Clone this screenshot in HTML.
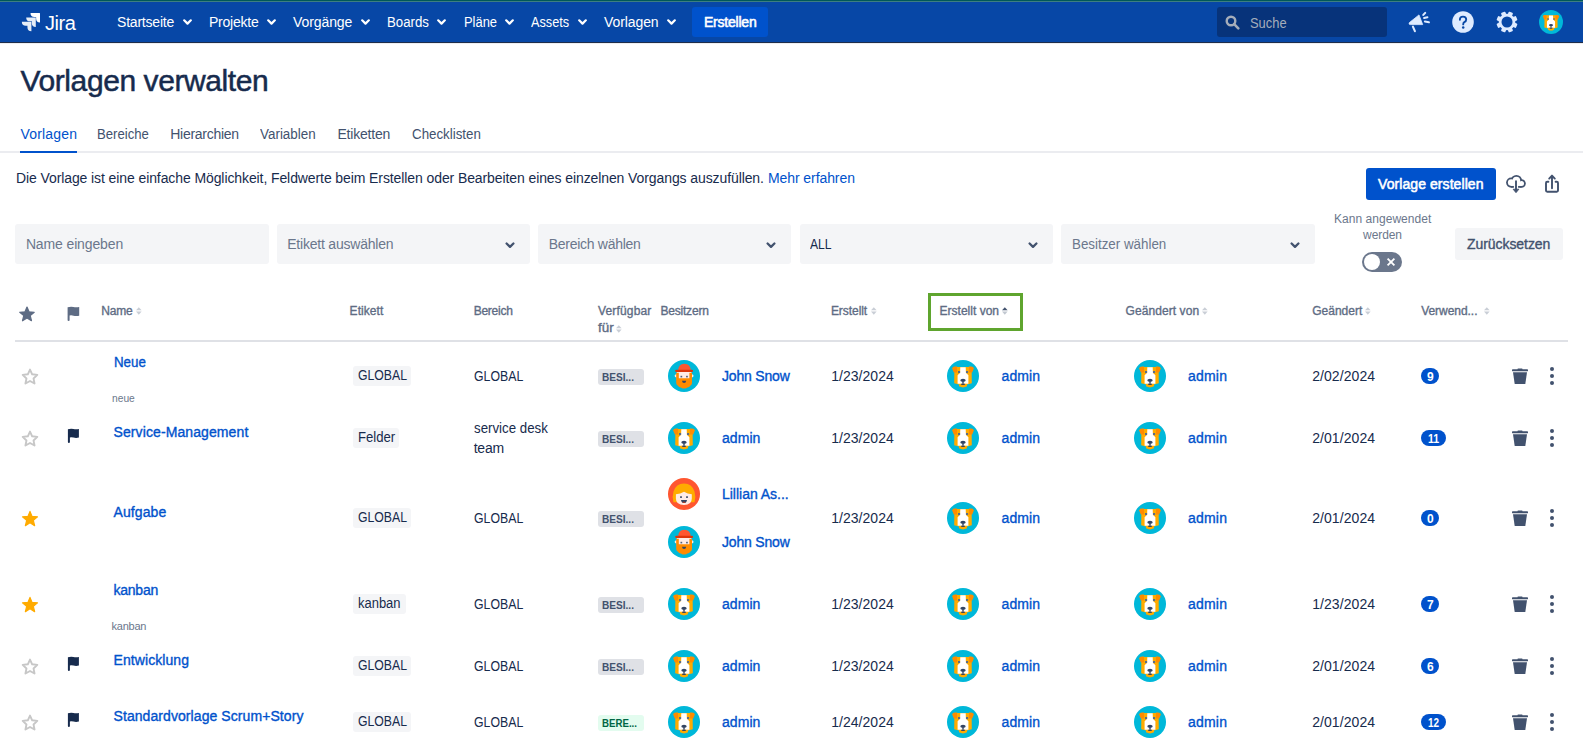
<!DOCTYPE html>
<html><head><meta charset="utf-8"><style>
html,body{margin:0;padding:0;width:1583px;height:740px;overflow:hidden;background:#fff;}
body{position:relative;font-family:"Liberation Sans",sans-serif;}
.t{position:absolute;white-space:nowrap;}
.r{position:absolute;display:block;}
</style></head><body>
<div class="r" style="left:0px;top:0px;width:1583px;height:42px;background:#0747A6;"></div>
<div class="r" style="left:0px;top:0px;width:1583px;height:1px;background:#00585A;"></div>
<div class="r" style="left:0px;top:1px;width:1583px;height:1px;background:#3D7F80;"></div>
<div class="r" style="left:0px;top:42px;width:1583px;height:1px;background:#1F2D4A;"></div>
<div class="r" style="left:0px;top:43px;width:1583px;height:1px;background:#EDEEF1;"></div>
<svg class="r" style="left:21px;top:13px;" width="19" height="19" viewBox="0 0 23 23"><g fill="#fff"><path d="M22.2 0H11.5a4.8 4.8 0 0 0 4.8 4.8h2v1.9a4.8 4.8 0 0 0 4.8 4.8V.9a.9.9 0 0 0-.9-.9z"/><path d="M16.9 5.3H6.3a4.8 4.8 0 0 0 4.8 4.8h2V12a4.8 4.8 0 0 0 4.8 4.8V6.2a.9.9 0 0 0-1-.9z" opacity=".9"/><path d="M11.6 10.7H1a4.8 4.8 0 0 0 4.8 4.8h2v1.9a4.8 4.8 0 0 0 4.8 4.8V11.6a.9.9 0 0 0-1-.9z" opacity=".9"/></g></svg>
<div class="t" style="left:45.00px;top:13.07px;font-size:20.00px;line-height:20.00px;color:#FFFFFF;letter-spacing:-0.417px;">Jira</div>
<div class="t" style="left:117.00px;top:15.15px;font-size:14.00px;line-height:14.00px;color:#FFFFFF;letter-spacing:-0.203px;">Startseite</div>
<svg class="r" style="left:183px;top:18.5px;" width="9" height="7" viewBox="0 0 9 7"><path d="M1.2 1.3L4.5 4.6L7.8 1.3" fill="none" stroke="#FFFFFF" stroke-width="2.2" stroke-linecap="round" stroke-linejoin="round"/></svg>
<div class="t" style="left:209.00px;top:15.15px;font-size:14.00px;line-height:14.00px;color:#FFFFFF;letter-spacing:-0.225px;">Projekte</div>
<svg class="r" style="left:267px;top:18.5px;" width="9" height="7" viewBox="0 0 9 7"><path d="M1.2 1.3L4.5 4.6L7.8 1.3" fill="none" stroke="#FFFFFF" stroke-width="2.2" stroke-linecap="round" stroke-linejoin="round"/></svg>
<div class="t" style="left:293.00px;top:15.15px;font-size:14.00px;line-height:14.00px;color:#FFFFFF;letter-spacing:-0.086px;">Vorgänge</div>
<svg class="r" style="left:361px;top:18.5px;" width="9" height="7" viewBox="0 0 9 7"><path d="M1.2 1.3L4.5 4.6L7.8 1.3" fill="none" stroke="#FFFFFF" stroke-width="2.2" stroke-linecap="round" stroke-linejoin="round"/></svg>
<div class="t" style="left:387.00px;top:15.15px;font-size:14.00px;line-height:14.00px;color:#FFFFFF;transform:scaleX(0.9465);transform-origin:0.00px 0;">Boards</div>
<svg class="r" style="left:437px;top:18.5px;" width="9" height="7" viewBox="0 0 9 7"><path d="M1.2 1.3L4.5 4.6L7.8 1.3" fill="none" stroke="#FFFFFF" stroke-width="2.2" stroke-linecap="round" stroke-linejoin="round"/></svg>
<div class="t" style="left:464.00px;top:15.15px;font-size:14.00px;line-height:14.00px;color:#FFFFFF;transform:scaleX(0.9231);transform-origin:0.00px 0;">Pläne</div>
<svg class="r" style="left:505px;top:18.5px;" width="9" height="7" viewBox="0 0 9 7"><path d="M1.2 1.3L4.5 4.6L7.8 1.3" fill="none" stroke="#FFFFFF" stroke-width="2.2" stroke-linecap="round" stroke-linejoin="round"/></svg>
<div class="t" style="left:531.00px;top:15.15px;font-size:14.00px;line-height:14.00px;color:#FFFFFF;transform:scaleX(0.9095);transform-origin:0.00px 0;">Assets</div>
<svg class="r" style="left:578px;top:18.5px;" width="9" height="7" viewBox="0 0 9 7"><path d="M1.2 1.3L4.5 4.6L7.8 1.3" fill="none" stroke="#FFFFFF" stroke-width="2.2" stroke-linecap="round" stroke-linejoin="round"/></svg>
<div class="t" style="left:604.00px;top:15.15px;font-size:14.00px;line-height:14.00px;color:#FFFFFF;letter-spacing:-0.093px;">Vorlagen</div>
<svg class="r" style="left:667px;top:18.5px;" width="9" height="7" viewBox="0 0 9 7"><path d="M1.2 1.3L4.5 4.6L7.8 1.3" fill="none" stroke="#FFFFFF" stroke-width="2.2" stroke-linecap="round" stroke-linejoin="round"/></svg>
<div class="r" style="left:692px;top:7px;width:76px;height:30px;background:#0052CC;border-radius:3px;"></div>
<div class="t" style="left:704.00px;top:15.15px;font-size:14.00px;line-height:14.00px;color:#FFFFFF;-webkit-text-stroke:0.55px #FFFFFF;letter-spacing:-0.219px;">Erstellen</div>
<div class="r" style="left:1217px;top:7px;width:170px;height:30px;background:#07337A;border-radius:3px;"></div>
<svg class="r" style="left:1225px;top:15px;" width="15" height="15" viewBox="0 0 15 15"><circle cx="6" cy="6" r="4.3" fill="none" stroke="#A5ADBA" stroke-width="2.4"/><path d="M9.2 9.2L13.3 13.3" stroke="#A5ADBA" stroke-width="2.6" stroke-linecap="round"/></svg>
<div class="t" style="left:1250.00px;top:16.15px;font-size:14.00px;line-height:14.00px;color:#A5ADBA;transform:scaleX(0.9208);transform-origin:0.00px 0;">Suche</div>
<svg class="r" style="left:1407px;top:11px;" width="24" height="22" viewBox="0 0 24 22"><path d="M2.4 11.6L12 3.9L15.7 13.6H3.2Q1.3 13.5 2.4 11.6Z" fill="#DEEBFF" stroke="#DEEBFF" stroke-width="0.8" stroke-linejoin="round"/><g stroke="#DEEBFF" stroke-width="2.1" stroke-linecap="round"><path d="M5.9 15.6L7.9 20.2"/><path d="M16.3 3.9L18.2 1.9"/><path d="M17.1 7L20.4 6.2"/><path d="M17.9 10.5L21.9 11.2"/></g></svg>
<svg class="r" style="left:1452px;top:11px;" width="22" height="22" viewBox="0 0 22 22"><circle cx="11" cy="11" r="10.8" fill="#DEEBFF"/><path d="M7.9 8.8Q7.9 5.6 11 5.6Q14.2 5.6 14.2 8.5Q14.2 10.3 12.3 11.2Q11.2 11.8 11.2 13.4" fill="none" stroke="#0747A6" stroke-width="1.9" stroke-linecap="round"/><circle cx="11.2" cy="16.4" r="1.25" fill="#0747A6"/></svg>
<svg class="r" style="left:1496px;top:11px;" width="22" height="22" viewBox="0 0 22 22"><g fill="#DEEBFF"><rect x="8.7" y="0.5" width="4.6" height="5" rx="0.9" transform="rotate(22.5 11 11)"/><rect x="8.7" y="0.5" width="4.6" height="5" rx="0.9" transform="rotate(67.5 11 11)"/><rect x="8.7" y="0.5" width="4.6" height="5" rx="0.9" transform="rotate(112.5 11 11)"/><rect x="8.7" y="0.5" width="4.6" height="5" rx="0.9" transform="rotate(157.5 11 11)"/><rect x="8.7" y="0.5" width="4.6" height="5" rx="0.9" transform="rotate(202.5 11 11)"/><rect x="8.7" y="0.5" width="4.6" height="5" rx="0.9" transform="rotate(247.5 11 11)"/><rect x="8.7" y="0.5" width="4.6" height="5" rx="0.9" transform="rotate(292.5 11 11)"/><rect x="8.7" y="0.5" width="4.6" height="5" rx="0.9" transform="rotate(337.5 11 11)"/><circle cx="11" cy="11" r="8.3"/></g><circle cx="11" cy="11" r="5.5" fill="#0747A6"/></svg>
<svg class="r" style="left:1539px;top:10px;" width="24" height="24" viewBox="0 0 32 32"><circle cx="16" cy="16" r="16" fill="#00B8D9"/><path d="M7.4 7H24.6L24.8 23.3L20 24.6V26.3Q16 28.6 12 26.3V24.6L7.2 23.3Z" fill="#FFAB00"/><path d="M5.2 8.5Q5.4 6.6 8 6.6H10V12.5H6.8Z" fill="#FF8B00"/><path d="M26.8 8.5Q26.6 6.6 24 6.6H22V12.5H25.2Z" fill="#FF8B00"/><path d="M13.3 7.2H18.7L18.9 12.8L21.4 15.2V23.8H10.6V15.2L13.1 12.8Z" fill="#FFFFFF"/><rect x="11" y="11" width="2.1" height="2.1" fill="#5E6C84"/><rect x="19" y="11" width="2.1" height="2.1" fill="#5E6C84"/><ellipse cx="16" cy="20.3" rx="2.7" ry="1.5" fill="#344563"/><rect x="15.3" y="21" width="1.4" height="2.8" fill="#344563"/><path d="M13.8 23.8H18.2L17.5 25H14.5Z" fill="#344563"/></svg>
<div class="t" style="left:20.60px;top:65.81px;font-size:30.00px;line-height:30.00px;color:#172B4D;-webkit-text-stroke:0.50px #172B4D;letter-spacing:-0.419px;">Vorlagen verwalten</div>
<div class="r" style="left:0px;top:151px;width:1583px;height:2px;background:#EBECF0;"></div>
<div class="t" style="left:20.60px;top:126.85px;font-size:14.00px;line-height:14.00px;color:#0052CC;letter-spacing:0.164px;">Vorlagen</div>
<div class="t" style="left:97.20px;top:126.85px;font-size:14.00px;line-height:14.00px;color:#42526E;transform:scaleX(0.9376);transform-origin:0.00px 0;">Bereiche</div>
<div class="t" style="left:170.20px;top:126.85px;font-size:14.00px;line-height:14.00px;color:#42526E;letter-spacing:-0.263px;">Hierarchien</div>
<div class="t" style="left:260.40px;top:126.85px;font-size:14.00px;line-height:14.00px;color:#42526E;transform:scaleX(0.9583);transform-origin:0.00px 0;">Variablen</div>
<div class="t" style="left:337.40px;top:126.85px;font-size:14.00px;line-height:14.00px;color:#42526E;letter-spacing:-0.188px;">Etiketten</div>
<div class="t" style="left:411.70px;top:126.85px;font-size:14.00px;line-height:14.00px;color:#42526E;transform:scaleX(0.9520);transform-origin:0.00px 0;">Checklisten</div>
<div class="r" style="left:20px;top:151px;width:57px;height:2px;background:#0052CC;"></div>
<div class="t" style="left:16.00px;top:170.95px;font-size:14.00px;line-height:14.00px;color:#172B4D;letter-spacing:-0.097px;">Die Vorlage ist eine einfache Möglichkeit, Feldwerte beim Erstellen oder Bearbeiten eines einzelnen Vorgangs auszufüllen.</div>
<div class="t" style="left:768.00px;top:170.95px;font-size:14.00px;line-height:14.00px;color:#0052CC;letter-spacing:-0.083px;">Mehr erfahren</div>
<div class="r" style="left:1366px;top:168px;width:130px;height:32px;background:#0052CC;border-radius:3px;"></div>
<div class="t" style="left:1378.00px;top:176.95px;font-size:14.00px;line-height:14.00px;color:#FFFFFF;-webkit-text-stroke:0.55px #FFFFFF;letter-spacing:0.075px;">Vorlage erstellen</div>
<svg class="r" style="left:1505px;top:174px;" width="22" height="20" viewBox="0 0 22 20"><g fill="#42526E"><circle cx="6.2" cy="8.6" r="5.1"/><circle cx="11.4" cy="6.5" r="5.6"/><circle cx="16.5" cy="9.45" r="4.3"/><rect x="6.2" y="8" width="10.3" height="5.75"/></g><g fill="#fff"><circle cx="6.2" cy="8.6" r="3.3"/><circle cx="11.4" cy="6.5" r="3.8"/><circle cx="16.5" cy="9.45" r="2.5"/><rect x="6.2" y="8" width="10.3" height="3.95"/><rect x="8.9" y="10" width="4.2" height="5"/></g><path d="M11 7.3V16" stroke="#42526E" stroke-width="1.9" stroke-linecap="round"/><path d="M8.1 15.2H13.9L11 18.7Z" fill="#42526E" stroke="#42526E" stroke-width="0.8" stroke-linejoin="round"/></svg>
<svg class="r" style="left:1544px;top:174px;" width="16" height="20" viewBox="0 0 16 20"><path d="M8 14.2V2M5.2 4.6L8 1.6L10.8 4.6" fill="none" stroke="#42526E" stroke-width="1.9" stroke-linecap="round" stroke-linejoin="round"/><path d="M4.4 7.8H3.2Q2 7.8 2 9V16.6Q2 17.8 3.2 17.8H12.8Q14 17.8 14 16.6V9Q14 7.8 12.8 7.8H11.6" fill="none" stroke="#42526E" stroke-width="1.9" stroke-linecap="round"/></svg>
<div class="r" style="left:15px;top:224px;width:254px;height:40px;background:#F4F5F7;border-radius:3px;"></div>
<div class="t" style="left:25.90px;top:236.85px;font-size:14.00px;line-height:14.00px;color:#6B778C;letter-spacing:-0.131px;">Name eingeben</div>
<div class="r" style="left:277px;top:224px;width:253px;height:40px;background:#F4F5F7;border-radius:3px;"></div>
<div class="t" style="left:287.20px;top:236.85px;font-size:14.00px;line-height:14.00px;color:#6B778C;letter-spacing:-0.209px;">Etikett auswählen</div>
<svg class="r" style="left:505px;top:241.5px;" width="10" height="7" viewBox="0 0 10 7"><path d="M1.6 1.5L5 4.9L8.4 1.5" fill="none" stroke="#42526E" stroke-width="2.3" stroke-linecap="round" stroke-linejoin="round"/></svg>
<div class="r" style="left:538px;top:224px;width:253px;height:40px;background:#F4F5F7;border-radius:3px;"></div>
<div class="t" style="left:548.80px;top:236.85px;font-size:14.00px;line-height:14.00px;color:#6B778C;letter-spacing:-0.288px;">Bereich wählen</div>
<svg class="r" style="left:766px;top:241.5px;" width="10" height="7" viewBox="0 0 10 7"><path d="M1.6 1.5L5 4.9L8.4 1.5" fill="none" stroke="#42526E" stroke-width="2.3" stroke-linecap="round" stroke-linejoin="round"/></svg>
<div class="r" style="left:800px;top:224px;width:253px;height:40px;background:#F4F5F7;border-radius:3px;"></div>
<div class="t" style="left:810.20px;top:236.85px;font-size:14.00px;line-height:14.00px;color:#172B4D;transform:scaleX(0.8683);transform-origin:0.00px 0;">ALL</div>
<svg class="r" style="left:1028px;top:241.5px;" width="10" height="7" viewBox="0 0 10 7"><path d="M1.6 1.5L5 4.9L8.4 1.5" fill="none" stroke="#42526E" stroke-width="2.3" stroke-linecap="round" stroke-linejoin="round"/></svg>
<div class="r" style="left:1061px;top:224px;width:254px;height:40px;background:#F4F5F7;border-radius:3px;"></div>
<div class="t" style="left:1072.10px;top:236.85px;font-size:14.00px;line-height:14.00px;color:#6B778C;transform:scaleX(0.9537);transform-origin:0.00px 0;">Besitzer wählen</div>
<svg class="r" style="left:1290px;top:241.5px;" width="10" height="7" viewBox="0 0 10 7"><path d="M1.6 1.5L5 4.9L8.4 1.5" fill="none" stroke="#42526E" stroke-width="2.3" stroke-linecap="round" stroke-linejoin="round"/></svg>
<div class="t" style="left:1334.00px;top:212.54px;font-size:12.00px;line-height:12.00px;color:#6B778C;letter-spacing:0.039px;">Kann angewendet</div>
<div class="t" style="left:1363.12px;top:228.54px;font-size:12.00px;line-height:12.00px;color:#6B778C;letter-spacing:-0.100px;">werden</div>
<div class="r" style="left:1362px;top:252px;width:40px;height:20px;background:#6B778C;border-radius:10px;"></div>
<div class="r" style="left:1364px;top:254px;width:16px;height:16px;background:#FFFFFF;border-radius:8px;"></div>
<svg class="r" style="left:1385px;top:256px;" width="12" height="12" viewBox="0 0 12 12"><path d="M2.6 2.6L9.4 9.4M9.4 2.6L2.6 9.4" stroke="#fff" stroke-width="1.8"/></svg>
<div class="r" style="left:1455px;top:228px;width:108px;height:32px;background:#F4F5F7;border-radius:3px;"></div>
<div class="t" style="left:1467.00px;top:237.15px;font-size:14.00px;line-height:14.00px;color:#42526E;-webkit-text-stroke:0.35px #42526E;letter-spacing:-0.059px;">Zurücksetzen</div>
<svg class="r" style="left:19px;top:306px;" width="16" height="16" viewBox="0 0 16 16"><path d="M8.00 1.00L10.00 5.85L15.23 6.25L11.23 9.65L12.47 14.75L8.00 12.00L3.53 14.75L4.77 9.65L0.77 6.25L6.00 5.85Z" fill="#5E6C84" stroke="#5E6C84" stroke-width="1.2" stroke-linejoin="round"/></svg>
<svg class="r" style="left:67px;top:306px;" width="13" height="16" viewBox="0 0 13 16"><path d="M0.6 1.2Q4 0.2 6.5 1Q9 1.7 12.2 1V9.7Q9 10.4 6.5 9.7Q4 9 2.6 9.6V14.2Q2.6 15 1.6 15Q0.6 15 0.6 14.2Z" fill="#5E6C84"/></svg>
<div class="t" style="left:101.20px;top:304.54px;font-size:12.00px;line-height:12.00px;color:#5E6C84;-webkit-text-stroke:0.35px #5E6C84;letter-spacing:-0.183px;">Name</div>
<svg class="r" style="left:135.6px;top:307px;" width="6" height="8" viewBox="0 0 6 8"><path d="M0 3.3L2.8 0.3L5.6 3.3Z" fill="#C9CED6"/><path d="M0 4.6L2.8 7.7L5.6 4.6Z" fill="#C9CED6"/></svg>
<div class="t" style="left:349.60px;top:304.54px;font-size:12.00px;line-height:12.00px;color:#5E6C84;-webkit-text-stroke:0.35px #5E6C84;letter-spacing:0.062px;">Etikett</div>
<div class="t" style="left:473.70px;top:304.54px;font-size:12.00px;line-height:12.00px;color:#5E6C84;-webkit-text-stroke:0.35px #5E6C84;letter-spacing:-0.250px;">Bereich</div>
<div class="t" style="left:598.00px;top:304.54px;font-size:12.00px;line-height:12.00px;color:#5E6C84;-webkit-text-stroke:0.35px #5E6C84;letter-spacing:0.156px;">Verfügbar</div>
<div class="t" style="left:660.40px;top:304.54px;font-size:12.00px;line-height:12.00px;color:#5E6C84;-webkit-text-stroke:0.35px #5E6C84;letter-spacing:-0.194px;">Besitzern</div>
<div class="t" style="left:830.90px;top:304.54px;font-size:12.00px;line-height:12.00px;color:#5E6C84;-webkit-text-stroke:0.35px #5E6C84;letter-spacing:-0.054px;">Erstellt</div>
<svg class="r" style="left:870.5px;top:307px;" width="6" height="8" viewBox="0 0 6 8"><path d="M0 3.3L2.8 0.3L5.6 3.3Z" fill="#C9CED6"/><path d="M0 4.6L2.8 7.7L5.6 4.6Z" fill="#C9CED6"/></svg>
<div class="t" style="left:939.50px;top:304.54px;font-size:12.00px;line-height:12.00px;color:#5E6C84;-webkit-text-stroke:0.35px #5E6C84;letter-spacing:0.016px;">Erstellt von</div>
<svg class="r" style="left:1002.4px;top:307px;" width="6" height="8" viewBox="0 0 6 8"><path d="M0 3.3L2.8 0.3L5.6 3.3Z" fill="#42526E"/><path d="M0 4.6L2.8 7.7L5.6 4.6Z" fill="#C1C7D0"/></svg>
<div class="t" style="left:1125.60px;top:304.54px;font-size:12.00px;line-height:12.00px;color:#5E6C84;-webkit-text-stroke:0.35px #5E6C84;letter-spacing:0.073px;">Geändert von</div>
<svg class="r" style="left:1202px;top:307px;" width="6" height="8" viewBox="0 0 6 8"><path d="M0 3.3L2.8 0.3L5.6 3.3Z" fill="#C9CED6"/><path d="M0 4.6L2.8 7.7L5.6 4.6Z" fill="#C9CED6"/></svg>
<div class="t" style="left:1312.20px;top:304.54px;font-size:12.00px;line-height:12.00px;color:#5E6C84;-webkit-text-stroke:0.35px #5E6C84;letter-spacing:0.007px;">Geändert</div>
<svg class="r" style="left:1365px;top:307px;" width="6" height="8" viewBox="0 0 6 8"><path d="M0 3.3L2.8 0.3L5.6 3.3Z" fill="#C9CED6"/><path d="M0 4.6L2.8 7.7L5.6 4.6Z" fill="#C9CED6"/></svg>
<div class="t" style="left:1421.20px;top:304.54px;font-size:12.00px;line-height:12.00px;color:#5E6C84;-webkit-text-stroke:0.35px #5E6C84;letter-spacing:-0.044px;">Verwend...</div>
<svg class="r" style="left:1484px;top:307px;" width="6" height="8" viewBox="0 0 6 8"><path d="M0 3.3L2.8 0.3L5.6 3.3Z" fill="#C9CED6"/><path d="M0 4.6L2.8 7.7L5.6 4.6Z" fill="#C9CED6"/></svg>
<div class="t" style="left:598.00px;top:321.84px;font-size:12.00px;line-height:12.00px;color:#5E6C84;-webkit-text-stroke:0.35px #5E6C84;transform:scaleX(1.1150);transform-origin:0.00px 0;">für</div>
<svg class="r" style="left:616px;top:324.5px;" width="6" height="8" viewBox="0 0 6 8"><path d="M0 3.3L2.8 0.3L5.6 3.3Z" fill="#C9CED6"/><path d="M0 4.6L2.8 7.7L5.6 4.6Z" fill="#C9CED6"/></svg>
<div class="r" style="left:928px;top:293px;width:95px;height:38px;background:transparent;box-sizing:border-box;border:3px solid #5FA52E;"></div>
<div class="r" style="left:15px;top:340px;width:1553px;height:2px;background:#DFE1E6;"></div>
<svg class="r" style="left:21px;top:367.5px;" width="18" height="17" viewBox="0 0 18 17"><path d="M9.00 1.60L11.17 6.31L16.32 6.92L12.52 10.44L13.53 15.53L9.00 13.00L4.47 15.53L5.48 10.44L1.68 6.92L6.83 6.31Z" fill="none" stroke="#C7C7C7" stroke-width="1.9" stroke-linejoin="round"/></svg>
<div class="t" style="left:113.50px;top:354.95px;font-size:14.00px;line-height:14.00px;color:#0052CC;-webkit-text-stroke:0.35px #0052CC;transform:scaleX(0.9513);transform-origin:0.00px 0;">Neue</div>
<div class="t" style="left:111.50px;top:392.89px;font-size:11.00px;line-height:11.00px;color:#6B778C;transform:scaleX(0.9306);transform-origin:0.00px 0;">neue</div>
<div class="r" style="left:353px;top:366px;width:58px;height:20px;background:#F4F5F7;border-radius:3px;"></div>
<div class="t" style="left:357.80px;top:368.15px;font-size:14.00px;line-height:14.00px;color:#172B4D;transform:scaleX(0.8750);transform-origin:0.00px 0;">GLOBAL</div>
<div class="t" style="left:473.80px;top:369.15px;font-size:14.00px;line-height:14.00px;color:#172B4D;transform:scaleX(0.8786);transform-origin:0.00px 0;">GLOBAL</div>
<div class="r" style="left:598px;top:369px;width:46px;height:16px;background:#DFE1E6;border-radius:3px;"></div>
<div class="t" style="left:602.20px;top:371.69px;font-size:11.00px;line-height:11.00px;color:#42526E;font-weight:700;transform:scaleX(0.9176);transform-origin:0.00px 0;">BESI...</div>
<svg class="r" style="left:668px;top:360px;" width="32" height="32" viewBox="0 0 32 32"><circle cx="16" cy="16" r="16" fill="#00B8D9"/><circle cx="8.3" cy="15.8" r="1.6" fill="#FFEBE6"/><circle cx="23.9" cy="15.8" r="1.6" fill="#FFEBE6"/><rect x="8.8" y="11" width="14.6" height="9" fill="#FFEBE6"/><path d="M8.2 12.8H10.8V18.2H21.4V12.8H24V23Q23.8 25 22.2 25.8Q21.2 27.6 19.2 27.4Q17.8 28.8 16.1 28.2Q14.4 28.8 13 27.4Q11 27.6 10 25.8Q8.4 25 8.2 23Z" fill="#FF8B00"/><path d="M10.3 10.5Q10.3 3.7 16.3 3.7Q22.6 3.7 22.6 10.5Z" fill="#FF5630"/><rect x="7.2" y="9.8" width="17.8" height="2.1" rx="1" fill="#DE350B"/><rect x="12.5" y="15.8" width="1.7" height="1.6" fill="#505F79"/><rect x="18.1" y="15.8" width="1.7" height="1.6" fill="#505F79"/><path d="M14 20.8H18.2Q18 23 16.1 23Q14.2 23 14 20.8Z" fill="#344563"/></svg>
<div class="t" style="left:722.00px;top:369.15px;font-size:14.00px;line-height:14.00px;color:#0052CC;-webkit-text-stroke:0.35px #0052CC;letter-spacing:-0.191px;">John Snow</div>
<div class="t" style="left:831.30px;top:369.15px;font-size:14.00px;line-height:14.00px;color:#172B4D;letter-spacing:0.019px;">1/23/2024</div>
<svg class="r" style="left:947px;top:360px;" width="32" height="32" viewBox="0 0 32 32"><circle cx="16" cy="16" r="16" fill="#00B8D9"/><path d="M7.4 7H24.6L24.8 23.3L20 24.6V26.3Q16 28.6 12 26.3V24.6L7.2 23.3Z" fill="#FFAB00"/><path d="M5.2 8.5Q5.4 6.6 8 6.6H10V12.5H6.8Z" fill="#FF8B00"/><path d="M26.8 8.5Q26.6 6.6 24 6.6H22V12.5H25.2Z" fill="#FF8B00"/><path d="M13.3 7.2H18.7L18.9 12.8L21.4 15.2V23.8H10.6V15.2L13.1 12.8Z" fill="#FFFFFF"/><rect x="11" y="11" width="2.1" height="2.1" fill="#5E6C84"/><rect x="19" y="11" width="2.1" height="2.1" fill="#5E6C84"/><ellipse cx="16" cy="20.3" rx="2.7" ry="1.5" fill="#344563"/><rect x="15.3" y="21" width="1.4" height="2.8" fill="#344563"/><path d="M13.8 23.8H18.2L17.5 25H14.5Z" fill="#344563"/></svg>
<div class="t" style="left:1001.60px;top:369.15px;font-size:14.00px;line-height:14.00px;color:#0052CC;-webkit-text-stroke:0.35px #0052CC;letter-spacing:0.056px;">admin</div>
<svg class="r" style="left:1134px;top:360px;" width="32" height="32" viewBox="0 0 32 32"><circle cx="16" cy="16" r="16" fill="#00B8D9"/><path d="M7.4 7H24.6L24.8 23.3L20 24.6V26.3Q16 28.6 12 26.3V24.6L7.2 23.3Z" fill="#FFAB00"/><path d="M5.2 8.5Q5.4 6.6 8 6.6H10V12.5H6.8Z" fill="#FF8B00"/><path d="M26.8 8.5Q26.6 6.6 24 6.6H22V12.5H25.2Z" fill="#FF8B00"/><path d="M13.3 7.2H18.7L18.9 12.8L21.4 15.2V23.8H10.6V15.2L13.1 12.8Z" fill="#FFFFFF"/><rect x="11" y="11" width="2.1" height="2.1" fill="#5E6C84"/><rect x="19" y="11" width="2.1" height="2.1" fill="#5E6C84"/><ellipse cx="16" cy="20.3" rx="2.7" ry="1.5" fill="#344563"/><rect x="15.3" y="21" width="1.4" height="2.8" fill="#344563"/><path d="M13.8 23.8H18.2L17.5 25H14.5Z" fill="#344563"/></svg>
<div class="t" style="left:1188.00px;top:369.15px;font-size:14.00px;line-height:14.00px;color:#0052CC;-webkit-text-stroke:0.35px #0052CC;letter-spacing:0.206px;">admin</div>
<div class="t" style="left:1312.20px;top:369.15px;font-size:14.00px;line-height:14.00px;color:#172B4D;letter-spacing:0.069px;">2/02/2024</div>
<div class="r" style="left:1421px;top:368px;width:18px;height:16px;background:#0052CC;border-radius:8px;"></div>
<div class="t" style="left:1427.00px;top:370.54px;font-size:12.00px;line-height:12.00px;color:#FFFFFF;font-weight:700;">9</div>
<svg class="r" style="left:1512px;top:368px;" width="16" height="16" viewBox="0 0 16 16"><path d="M6 0.5H10Q10.5 0.5 10.5 1.2H15.3Q16 1.2 16 2V2.7Q16 3.3 15.3 3.3H0.7Q0 3.3 0 2.7V2Q0 1.2 0.7 1.2H5.5Q5.5 0.5 6 0.5Z" fill="#42526E"/><path d="M1 4.3H15L13.3 16H2.7Z" fill="#42526E"/></svg>
<svg class="r" style="left:1548px;top:366px;" width="8" height="20" viewBox="0 0 8 20"><circle cx="4" cy="3" r="2" fill="#42526E"/><circle cx="4" cy="10" r="2" fill="#42526E"/><circle cx="4" cy="17" r="2" fill="#42526E"/></svg>
<svg class="r" style="left:21px;top:429.5px;" width="18" height="17" viewBox="0 0 18 17"><path d="M9.00 1.60L11.17 6.31L16.32 6.92L12.52 10.44L13.53 15.53L9.00 13.00L4.47 15.53L5.48 10.44L1.68 6.92L6.83 6.31Z" fill="none" stroke="#C7C7C7" stroke-width="1.9" stroke-linejoin="round"/></svg>
<svg class="r" style="left:67px;top:428px;" width="13" height="16" viewBox="0 0 13 16"><path d="M0.9 1.2Q4 0.2 6.5 1Q9 1.7 11.9 1V9.6Q9 10.3 6.5 9.6Q4 9 2.9 9.5V14.1Q2.9 15 1.9 15Q0.9 15 0.9 14.1Z" fill="#172B4D"/></svg>
<div class="t" style="left:113.50px;top:425.15px;font-size:14.00px;line-height:14.00px;color:#0052CC;-webkit-text-stroke:0.35px #0052CC;letter-spacing:0.101px;">Service-Management</div>
<div class="r" style="left:353px;top:428px;width:46px;height:20px;background:#F4F5F7;border-radius:3px;"></div>
<div class="t" style="left:357.80px;top:430.15px;font-size:14.00px;line-height:14.00px;color:#172B4D;transform:scaleX(0.9384);transform-origin:0.00px 0;">Felder</div>
<div class="t" style="left:473.70px;top:421.15px;font-size:14.00px;line-height:14.00px;color:#172B4D;transform:scaleX(0.9487);transform-origin:0.00px 0;">service desk</div>
<div class="t" style="left:473.70px;top:440.75px;font-size:14.00px;line-height:14.00px;color:#172B4D;letter-spacing:-0.208px;">team</div>
<div class="r" style="left:598px;top:431px;width:46px;height:16px;background:#DFE1E6;border-radius:3px;"></div>
<div class="t" style="left:602.20px;top:433.69px;font-size:11.00px;line-height:11.00px;color:#42526E;font-weight:700;transform:scaleX(0.9176);transform-origin:0.00px 0;">BESI...</div>
<svg class="r" style="left:668px;top:422px;" width="32" height="32" viewBox="0 0 32 32"><circle cx="16" cy="16" r="16" fill="#00B8D9"/><path d="M7.4 7H24.6L24.8 23.3L20 24.6V26.3Q16 28.6 12 26.3V24.6L7.2 23.3Z" fill="#FFAB00"/><path d="M5.2 8.5Q5.4 6.6 8 6.6H10V12.5H6.8Z" fill="#FF8B00"/><path d="M26.8 8.5Q26.6 6.6 24 6.6H22V12.5H25.2Z" fill="#FF8B00"/><path d="M13.3 7.2H18.7L18.9 12.8L21.4 15.2V23.8H10.6V15.2L13.1 12.8Z" fill="#FFFFFF"/><rect x="11" y="11" width="2.1" height="2.1" fill="#5E6C84"/><rect x="19" y="11" width="2.1" height="2.1" fill="#5E6C84"/><ellipse cx="16" cy="20.3" rx="2.7" ry="1.5" fill="#344563"/><rect x="15.3" y="21" width="1.4" height="2.8" fill="#344563"/><path d="M13.8 23.8H18.2L17.5 25H14.5Z" fill="#344563"/></svg>
<div class="t" style="left:722.00px;top:431.15px;font-size:14.00px;line-height:14.00px;color:#0052CC;-webkit-text-stroke:0.35px #0052CC;letter-spacing:0.056px;">admin</div>
<div class="t" style="left:831.30px;top:431.15px;font-size:14.00px;line-height:14.00px;color:#172B4D;letter-spacing:0.019px;">1/23/2024</div>
<svg class="r" style="left:947px;top:422px;" width="32" height="32" viewBox="0 0 32 32"><circle cx="16" cy="16" r="16" fill="#00B8D9"/><path d="M7.4 7H24.6L24.8 23.3L20 24.6V26.3Q16 28.6 12 26.3V24.6L7.2 23.3Z" fill="#FFAB00"/><path d="M5.2 8.5Q5.4 6.6 8 6.6H10V12.5H6.8Z" fill="#FF8B00"/><path d="M26.8 8.5Q26.6 6.6 24 6.6H22V12.5H25.2Z" fill="#FF8B00"/><path d="M13.3 7.2H18.7L18.9 12.8L21.4 15.2V23.8H10.6V15.2L13.1 12.8Z" fill="#FFFFFF"/><rect x="11" y="11" width="2.1" height="2.1" fill="#5E6C84"/><rect x="19" y="11" width="2.1" height="2.1" fill="#5E6C84"/><ellipse cx="16" cy="20.3" rx="2.7" ry="1.5" fill="#344563"/><rect x="15.3" y="21" width="1.4" height="2.8" fill="#344563"/><path d="M13.8 23.8H18.2L17.5 25H14.5Z" fill="#344563"/></svg>
<div class="t" style="left:1001.60px;top:431.15px;font-size:14.00px;line-height:14.00px;color:#0052CC;-webkit-text-stroke:0.35px #0052CC;letter-spacing:0.056px;">admin</div>
<svg class="r" style="left:1134px;top:422px;" width="32" height="32" viewBox="0 0 32 32"><circle cx="16" cy="16" r="16" fill="#00B8D9"/><path d="M7.4 7H24.6L24.8 23.3L20 24.6V26.3Q16 28.6 12 26.3V24.6L7.2 23.3Z" fill="#FFAB00"/><path d="M5.2 8.5Q5.4 6.6 8 6.6H10V12.5H6.8Z" fill="#FF8B00"/><path d="M26.8 8.5Q26.6 6.6 24 6.6H22V12.5H25.2Z" fill="#FF8B00"/><path d="M13.3 7.2H18.7L18.9 12.8L21.4 15.2V23.8H10.6V15.2L13.1 12.8Z" fill="#FFFFFF"/><rect x="11" y="11" width="2.1" height="2.1" fill="#5E6C84"/><rect x="19" y="11" width="2.1" height="2.1" fill="#5E6C84"/><ellipse cx="16" cy="20.3" rx="2.7" ry="1.5" fill="#344563"/><rect x="15.3" y="21" width="1.4" height="2.8" fill="#344563"/><path d="M13.8 23.8H18.2L17.5 25H14.5Z" fill="#344563"/></svg>
<div class="t" style="left:1188.00px;top:431.15px;font-size:14.00px;line-height:14.00px;color:#0052CC;-webkit-text-stroke:0.35px #0052CC;letter-spacing:0.206px;">admin</div>
<div class="t" style="left:1312.20px;top:431.15px;font-size:14.00px;line-height:14.00px;color:#172B4D;letter-spacing:0.069px;">2/01/2024</div>
<div class="r" style="left:1421px;top:430px;width:25px;height:16px;background:#0052CC;border-radius:8px;"></div>
<div class="t" style="left:1427.95px;top:432.54px;font-size:12.00px;line-height:12.00px;color:#FFFFFF;font-weight:700;transform:scaleX(0.8792);transform-origin:0.00px 0;">11</div>
<svg class="r" style="left:1512px;top:430px;" width="16" height="16" viewBox="0 0 16 16"><path d="M6 0.5H10Q10.5 0.5 10.5 1.2H15.3Q16 1.2 16 2V2.7Q16 3.3 15.3 3.3H0.7Q0 3.3 0 2.7V2Q0 1.2 0.7 1.2H5.5Q5.5 0.5 6 0.5Z" fill="#42526E"/><path d="M1 4.3H15L13.3 16H2.7Z" fill="#42526E"/></svg>
<svg class="r" style="left:1548px;top:428px;" width="8" height="20" viewBox="0 0 8 20"><circle cx="4" cy="3" r="2" fill="#42526E"/><circle cx="4" cy="10" r="2" fill="#42526E"/><circle cx="4" cy="17" r="2" fill="#42526E"/></svg>
<svg class="r" style="left:21px;top:509.5px;" width="18" height="17" viewBox="0 0 18 17"><path d="M9.00 1.40L11.06 6.47L16.51 6.86L12.33 10.38L13.64 15.69L9.00 12.80L4.36 15.69L5.67 10.38L1.49 6.86L6.94 6.47Z" fill="#FFAB00" stroke="#FFAB00" stroke-width="1.2" stroke-linejoin="round"/></svg>
<div class="t" style="left:113.50px;top:505.15px;font-size:14.00px;line-height:14.00px;color:#0052CC;-webkit-text-stroke:0.35px #0052CC;letter-spacing:0.104px;">Aufgabe</div>
<div class="r" style="left:353px;top:508px;width:58px;height:20px;background:#F4F5F7;border-radius:3px;"></div>
<div class="t" style="left:357.80px;top:510.15px;font-size:14.00px;line-height:14.00px;color:#172B4D;transform:scaleX(0.8750);transform-origin:0.00px 0;">GLOBAL</div>
<div class="t" style="left:473.80px;top:511.15px;font-size:14.00px;line-height:14.00px;color:#172B4D;transform:scaleX(0.8786);transform-origin:0.00px 0;">GLOBAL</div>
<div class="r" style="left:598px;top:511px;width:46px;height:16px;background:#DFE1E6;border-radius:3px;"></div>
<div class="t" style="left:602.20px;top:513.69px;font-size:11.00px;line-height:11.00px;color:#42526E;font-weight:700;transform:scaleX(0.9176);transform-origin:0.00px 0;">BESI...</div>
<svg class="r" style="left:668px;top:478px;" width="32" height="32" viewBox="0 0 32 32"><circle cx="16" cy="16" r="16" fill="#FF5630"/><path d="M5.5 24.3Q3.8 19 5.5 13.5Q8 5.4 16 5.4Q24 5.4 26.5 13.5Q28.2 19 26.5 24.3Z" fill="#FFAB00"/><path d="M7.9 16.2Q12.5 16 16 13.8Q19.5 16 23.8 16.2V20.5Q23.8 27 16 27Q7.9 27 7.9 20.5Z" fill="#FFEBE6"/><rect x="12.1" y="18.3" width="1.8" height="1.6" fill="#344563"/><rect x="18.1" y="18.3" width="1.8" height="1.6" fill="#344563"/><path d="M13 21.9H19Q18.6 25 16 25Q13.4 25 13 21.9Z" fill="#344563"/><path d="M14.5 24.1Q16 23.3 17.5 24.1Q16.9 24.9 16 24.9Q15.1 24.9 14.5 24.1Z" fill="#DE350B"/></svg>
<div class="t" style="left:722.00px;top:487.15px;font-size:14.00px;line-height:14.00px;color:#0052CC;-webkit-text-stroke:0.35px #0052CC;letter-spacing:-0.019px;">Lillian As...</div>
<svg class="r" style="left:668px;top:526px;" width="32" height="32" viewBox="0 0 32 32"><circle cx="16" cy="16" r="16" fill="#00B8D9"/><circle cx="8.3" cy="15.8" r="1.6" fill="#FFEBE6"/><circle cx="23.9" cy="15.8" r="1.6" fill="#FFEBE6"/><rect x="8.8" y="11" width="14.6" height="9" fill="#FFEBE6"/><path d="M8.2 12.8H10.8V18.2H21.4V12.8H24V23Q23.8 25 22.2 25.8Q21.2 27.6 19.2 27.4Q17.8 28.8 16.1 28.2Q14.4 28.8 13 27.4Q11 27.6 10 25.8Q8.4 25 8.2 23Z" fill="#FF8B00"/><path d="M10.3 10.5Q10.3 3.7 16.3 3.7Q22.6 3.7 22.6 10.5Z" fill="#FF5630"/><rect x="7.2" y="9.8" width="17.8" height="2.1" rx="1" fill="#DE350B"/><rect x="12.5" y="15.8" width="1.7" height="1.6" fill="#505F79"/><rect x="18.1" y="15.8" width="1.7" height="1.6" fill="#505F79"/><path d="M14 20.8H18.2Q18 23 16.1 23Q14.2 23 14 20.8Z" fill="#344563"/></svg>
<div class="t" style="left:722.00px;top:535.15px;font-size:14.00px;line-height:14.00px;color:#0052CC;-webkit-text-stroke:0.35px #0052CC;letter-spacing:-0.191px;">John Snow</div>
<div class="t" style="left:831.30px;top:511.15px;font-size:14.00px;line-height:14.00px;color:#172B4D;letter-spacing:0.019px;">1/23/2024</div>
<svg class="r" style="left:947px;top:502px;" width="32" height="32" viewBox="0 0 32 32"><circle cx="16" cy="16" r="16" fill="#00B8D9"/><path d="M7.4 7H24.6L24.8 23.3L20 24.6V26.3Q16 28.6 12 26.3V24.6L7.2 23.3Z" fill="#FFAB00"/><path d="M5.2 8.5Q5.4 6.6 8 6.6H10V12.5H6.8Z" fill="#FF8B00"/><path d="M26.8 8.5Q26.6 6.6 24 6.6H22V12.5H25.2Z" fill="#FF8B00"/><path d="M13.3 7.2H18.7L18.9 12.8L21.4 15.2V23.8H10.6V15.2L13.1 12.8Z" fill="#FFFFFF"/><rect x="11" y="11" width="2.1" height="2.1" fill="#5E6C84"/><rect x="19" y="11" width="2.1" height="2.1" fill="#5E6C84"/><ellipse cx="16" cy="20.3" rx="2.7" ry="1.5" fill="#344563"/><rect x="15.3" y="21" width="1.4" height="2.8" fill="#344563"/><path d="M13.8 23.8H18.2L17.5 25H14.5Z" fill="#344563"/></svg>
<div class="t" style="left:1001.60px;top:511.15px;font-size:14.00px;line-height:14.00px;color:#0052CC;-webkit-text-stroke:0.35px #0052CC;letter-spacing:0.056px;">admin</div>
<svg class="r" style="left:1134px;top:502px;" width="32" height="32" viewBox="0 0 32 32"><circle cx="16" cy="16" r="16" fill="#00B8D9"/><path d="M7.4 7H24.6L24.8 23.3L20 24.6V26.3Q16 28.6 12 26.3V24.6L7.2 23.3Z" fill="#FFAB00"/><path d="M5.2 8.5Q5.4 6.6 8 6.6H10V12.5H6.8Z" fill="#FF8B00"/><path d="M26.8 8.5Q26.6 6.6 24 6.6H22V12.5H25.2Z" fill="#FF8B00"/><path d="M13.3 7.2H18.7L18.9 12.8L21.4 15.2V23.8H10.6V15.2L13.1 12.8Z" fill="#FFFFFF"/><rect x="11" y="11" width="2.1" height="2.1" fill="#5E6C84"/><rect x="19" y="11" width="2.1" height="2.1" fill="#5E6C84"/><ellipse cx="16" cy="20.3" rx="2.7" ry="1.5" fill="#344563"/><rect x="15.3" y="21" width="1.4" height="2.8" fill="#344563"/><path d="M13.8 23.8H18.2L17.5 25H14.5Z" fill="#344563"/></svg>
<div class="t" style="left:1188.00px;top:511.15px;font-size:14.00px;line-height:14.00px;color:#0052CC;-webkit-text-stroke:0.35px #0052CC;letter-spacing:0.206px;">admin</div>
<div class="t" style="left:1312.20px;top:511.15px;font-size:14.00px;line-height:14.00px;color:#172B4D;letter-spacing:0.069px;">2/01/2024</div>
<div class="r" style="left:1421px;top:510px;width:18px;height:16px;background:#0052CC;border-radius:8px;"></div>
<div class="t" style="left:1427.00px;top:512.54px;font-size:12.00px;line-height:12.00px;color:#FFFFFF;font-weight:700;">0</div>
<svg class="r" style="left:1512px;top:510px;" width="16" height="16" viewBox="0 0 16 16"><path d="M6 0.5H10Q10.5 0.5 10.5 1.2H15.3Q16 1.2 16 2V2.7Q16 3.3 15.3 3.3H0.7Q0 3.3 0 2.7V2Q0 1.2 0.7 1.2H5.5Q5.5 0.5 6 0.5Z" fill="#42526E"/><path d="M1 4.3H15L13.3 16H2.7Z" fill="#42526E"/></svg>
<svg class="r" style="left:1548px;top:508px;" width="8" height="20" viewBox="0 0 8 20"><circle cx="4" cy="3" r="2" fill="#42526E"/><circle cx="4" cy="10" r="2" fill="#42526E"/><circle cx="4" cy="17" r="2" fill="#42526E"/></svg>
<svg class="r" style="left:21px;top:595.5px;" width="18" height="17" viewBox="0 0 18 17"><path d="M9.00 1.40L11.06 6.47L16.51 6.86L12.33 10.38L13.64 15.69L9.00 12.80L4.36 15.69L5.67 10.38L1.49 6.86L6.94 6.47Z" fill="#FFAB00" stroke="#FFAB00" stroke-width="1.2" stroke-linejoin="round"/></svg>
<div class="t" style="left:113.50px;top:582.95px;font-size:14.00px;line-height:14.00px;color:#0052CC;-webkit-text-stroke:0.35px #0052CC;letter-spacing:-0.245px;">kanban</div>
<div class="t" style="left:111.50px;top:620.89px;font-size:11.00px;line-height:11.00px;color:#6B778C;letter-spacing:-0.225px;">kanban</div>
<div class="r" style="left:353px;top:594px;width:53px;height:20px;background:#F4F5F7;border-radius:3px;"></div>
<div class="t" style="left:357.80px;top:596.15px;font-size:14.00px;line-height:14.00px;color:#172B4D;transform:scaleX(0.9264);transform-origin:0.00px 0;">kanban</div>
<div class="t" style="left:473.80px;top:597.15px;font-size:14.00px;line-height:14.00px;color:#172B4D;transform:scaleX(0.8786);transform-origin:0.00px 0;">GLOBAL</div>
<div class="r" style="left:598px;top:597px;width:46px;height:16px;background:#DFE1E6;border-radius:3px;"></div>
<div class="t" style="left:602.20px;top:599.69px;font-size:11.00px;line-height:11.00px;color:#42526E;font-weight:700;transform:scaleX(0.9176);transform-origin:0.00px 0;">BESI...</div>
<svg class="r" style="left:668px;top:588px;" width="32" height="32" viewBox="0 0 32 32"><circle cx="16" cy="16" r="16" fill="#00B8D9"/><path d="M7.4 7H24.6L24.8 23.3L20 24.6V26.3Q16 28.6 12 26.3V24.6L7.2 23.3Z" fill="#FFAB00"/><path d="M5.2 8.5Q5.4 6.6 8 6.6H10V12.5H6.8Z" fill="#FF8B00"/><path d="M26.8 8.5Q26.6 6.6 24 6.6H22V12.5H25.2Z" fill="#FF8B00"/><path d="M13.3 7.2H18.7L18.9 12.8L21.4 15.2V23.8H10.6V15.2L13.1 12.8Z" fill="#FFFFFF"/><rect x="11" y="11" width="2.1" height="2.1" fill="#5E6C84"/><rect x="19" y="11" width="2.1" height="2.1" fill="#5E6C84"/><ellipse cx="16" cy="20.3" rx="2.7" ry="1.5" fill="#344563"/><rect x="15.3" y="21" width="1.4" height="2.8" fill="#344563"/><path d="M13.8 23.8H18.2L17.5 25H14.5Z" fill="#344563"/></svg>
<div class="t" style="left:722.00px;top:597.15px;font-size:14.00px;line-height:14.00px;color:#0052CC;-webkit-text-stroke:0.35px #0052CC;letter-spacing:0.056px;">admin</div>
<div class="t" style="left:831.30px;top:597.15px;font-size:14.00px;line-height:14.00px;color:#172B4D;letter-spacing:0.019px;">1/23/2024</div>
<svg class="r" style="left:947px;top:588px;" width="32" height="32" viewBox="0 0 32 32"><circle cx="16" cy="16" r="16" fill="#00B8D9"/><path d="M7.4 7H24.6L24.8 23.3L20 24.6V26.3Q16 28.6 12 26.3V24.6L7.2 23.3Z" fill="#FFAB00"/><path d="M5.2 8.5Q5.4 6.6 8 6.6H10V12.5H6.8Z" fill="#FF8B00"/><path d="M26.8 8.5Q26.6 6.6 24 6.6H22V12.5H25.2Z" fill="#FF8B00"/><path d="M13.3 7.2H18.7L18.9 12.8L21.4 15.2V23.8H10.6V15.2L13.1 12.8Z" fill="#FFFFFF"/><rect x="11" y="11" width="2.1" height="2.1" fill="#5E6C84"/><rect x="19" y="11" width="2.1" height="2.1" fill="#5E6C84"/><ellipse cx="16" cy="20.3" rx="2.7" ry="1.5" fill="#344563"/><rect x="15.3" y="21" width="1.4" height="2.8" fill="#344563"/><path d="M13.8 23.8H18.2L17.5 25H14.5Z" fill="#344563"/></svg>
<div class="t" style="left:1001.60px;top:597.15px;font-size:14.00px;line-height:14.00px;color:#0052CC;-webkit-text-stroke:0.35px #0052CC;letter-spacing:0.056px;">admin</div>
<svg class="r" style="left:1134px;top:588px;" width="32" height="32" viewBox="0 0 32 32"><circle cx="16" cy="16" r="16" fill="#00B8D9"/><path d="M7.4 7H24.6L24.8 23.3L20 24.6V26.3Q16 28.6 12 26.3V24.6L7.2 23.3Z" fill="#FFAB00"/><path d="M5.2 8.5Q5.4 6.6 8 6.6H10V12.5H6.8Z" fill="#FF8B00"/><path d="M26.8 8.5Q26.6 6.6 24 6.6H22V12.5H25.2Z" fill="#FF8B00"/><path d="M13.3 7.2H18.7L18.9 12.8L21.4 15.2V23.8H10.6V15.2L13.1 12.8Z" fill="#FFFFFF"/><rect x="11" y="11" width="2.1" height="2.1" fill="#5E6C84"/><rect x="19" y="11" width="2.1" height="2.1" fill="#5E6C84"/><ellipse cx="16" cy="20.3" rx="2.7" ry="1.5" fill="#344563"/><rect x="15.3" y="21" width="1.4" height="2.8" fill="#344563"/><path d="M13.8 23.8H18.2L17.5 25H14.5Z" fill="#344563"/></svg>
<div class="t" style="left:1188.00px;top:597.15px;font-size:14.00px;line-height:14.00px;color:#0052CC;-webkit-text-stroke:0.35px #0052CC;letter-spacing:0.206px;">admin</div>
<div class="t" style="left:1312.20px;top:597.15px;font-size:14.00px;line-height:14.00px;color:#172B4D;letter-spacing:0.069px;">1/23/2024</div>
<div class="r" style="left:1421px;top:596px;width:18px;height:16px;background:#0052CC;border-radius:8px;"></div>
<div class="t" style="left:1427.00px;top:598.54px;font-size:12.00px;line-height:12.00px;color:#FFFFFF;font-weight:700;">7</div>
<svg class="r" style="left:1512px;top:596px;" width="16" height="16" viewBox="0 0 16 16"><path d="M6 0.5H10Q10.5 0.5 10.5 1.2H15.3Q16 1.2 16 2V2.7Q16 3.3 15.3 3.3H0.7Q0 3.3 0 2.7V2Q0 1.2 0.7 1.2H5.5Q5.5 0.5 6 0.5Z" fill="#42526E"/><path d="M1 4.3H15L13.3 16H2.7Z" fill="#42526E"/></svg>
<svg class="r" style="left:1548px;top:594px;" width="8" height="20" viewBox="0 0 8 20"><circle cx="4" cy="3" r="2" fill="#42526E"/><circle cx="4" cy="10" r="2" fill="#42526E"/><circle cx="4" cy="17" r="2" fill="#42526E"/></svg>
<svg class="r" style="left:21px;top:657.5px;" width="18" height="17" viewBox="0 0 18 17"><path d="M9.00 1.60L11.17 6.31L16.32 6.92L12.52 10.44L13.53 15.53L9.00 13.00L4.47 15.53L5.48 10.44L1.68 6.92L6.83 6.31Z" fill="none" stroke="#C7C7C7" stroke-width="1.9" stroke-linejoin="round"/></svg>
<svg class="r" style="left:67px;top:656px;" width="13" height="16" viewBox="0 0 13 16"><path d="M0.9 1.2Q4 0.2 6.5 1Q9 1.7 11.9 1V9.6Q9 10.3 6.5 9.6Q4 9 2.9 9.5V14.1Q2.9 15 1.9 15Q0.9 15 0.9 14.1Z" fill="#172B4D"/></svg>
<div class="t" style="left:113.50px;top:653.15px;font-size:14.00px;line-height:14.00px;color:#0052CC;-webkit-text-stroke:0.35px #0052CC;letter-spacing:0.080px;">Entwicklung</div>
<div class="r" style="left:353px;top:656px;width:58px;height:20px;background:#F4F5F7;border-radius:3px;"></div>
<div class="t" style="left:357.80px;top:658.15px;font-size:14.00px;line-height:14.00px;color:#172B4D;transform:scaleX(0.8750);transform-origin:0.00px 0;">GLOBAL</div>
<div class="t" style="left:473.80px;top:659.15px;font-size:14.00px;line-height:14.00px;color:#172B4D;transform:scaleX(0.8786);transform-origin:0.00px 0;">GLOBAL</div>
<div class="r" style="left:598px;top:659px;width:46px;height:16px;background:#DFE1E6;border-radius:3px;"></div>
<div class="t" style="left:602.20px;top:661.69px;font-size:11.00px;line-height:11.00px;color:#42526E;font-weight:700;transform:scaleX(0.9176);transform-origin:0.00px 0;">BESI...</div>
<svg class="r" style="left:668px;top:650px;" width="32" height="32" viewBox="0 0 32 32"><circle cx="16" cy="16" r="16" fill="#00B8D9"/><path d="M7.4 7H24.6L24.8 23.3L20 24.6V26.3Q16 28.6 12 26.3V24.6L7.2 23.3Z" fill="#FFAB00"/><path d="M5.2 8.5Q5.4 6.6 8 6.6H10V12.5H6.8Z" fill="#FF8B00"/><path d="M26.8 8.5Q26.6 6.6 24 6.6H22V12.5H25.2Z" fill="#FF8B00"/><path d="M13.3 7.2H18.7L18.9 12.8L21.4 15.2V23.8H10.6V15.2L13.1 12.8Z" fill="#FFFFFF"/><rect x="11" y="11" width="2.1" height="2.1" fill="#5E6C84"/><rect x="19" y="11" width="2.1" height="2.1" fill="#5E6C84"/><ellipse cx="16" cy="20.3" rx="2.7" ry="1.5" fill="#344563"/><rect x="15.3" y="21" width="1.4" height="2.8" fill="#344563"/><path d="M13.8 23.8H18.2L17.5 25H14.5Z" fill="#344563"/></svg>
<div class="t" style="left:722.00px;top:659.15px;font-size:14.00px;line-height:14.00px;color:#0052CC;-webkit-text-stroke:0.35px #0052CC;letter-spacing:0.056px;">admin</div>
<div class="t" style="left:831.30px;top:659.15px;font-size:14.00px;line-height:14.00px;color:#172B4D;letter-spacing:0.019px;">1/23/2024</div>
<svg class="r" style="left:947px;top:650px;" width="32" height="32" viewBox="0 0 32 32"><circle cx="16" cy="16" r="16" fill="#00B8D9"/><path d="M7.4 7H24.6L24.8 23.3L20 24.6V26.3Q16 28.6 12 26.3V24.6L7.2 23.3Z" fill="#FFAB00"/><path d="M5.2 8.5Q5.4 6.6 8 6.6H10V12.5H6.8Z" fill="#FF8B00"/><path d="M26.8 8.5Q26.6 6.6 24 6.6H22V12.5H25.2Z" fill="#FF8B00"/><path d="M13.3 7.2H18.7L18.9 12.8L21.4 15.2V23.8H10.6V15.2L13.1 12.8Z" fill="#FFFFFF"/><rect x="11" y="11" width="2.1" height="2.1" fill="#5E6C84"/><rect x="19" y="11" width="2.1" height="2.1" fill="#5E6C84"/><ellipse cx="16" cy="20.3" rx="2.7" ry="1.5" fill="#344563"/><rect x="15.3" y="21" width="1.4" height="2.8" fill="#344563"/><path d="M13.8 23.8H18.2L17.5 25H14.5Z" fill="#344563"/></svg>
<div class="t" style="left:1001.60px;top:659.15px;font-size:14.00px;line-height:14.00px;color:#0052CC;-webkit-text-stroke:0.35px #0052CC;letter-spacing:0.056px;">admin</div>
<svg class="r" style="left:1134px;top:650px;" width="32" height="32" viewBox="0 0 32 32"><circle cx="16" cy="16" r="16" fill="#00B8D9"/><path d="M7.4 7H24.6L24.8 23.3L20 24.6V26.3Q16 28.6 12 26.3V24.6L7.2 23.3Z" fill="#FFAB00"/><path d="M5.2 8.5Q5.4 6.6 8 6.6H10V12.5H6.8Z" fill="#FF8B00"/><path d="M26.8 8.5Q26.6 6.6 24 6.6H22V12.5H25.2Z" fill="#FF8B00"/><path d="M13.3 7.2H18.7L18.9 12.8L21.4 15.2V23.8H10.6V15.2L13.1 12.8Z" fill="#FFFFFF"/><rect x="11" y="11" width="2.1" height="2.1" fill="#5E6C84"/><rect x="19" y="11" width="2.1" height="2.1" fill="#5E6C84"/><ellipse cx="16" cy="20.3" rx="2.7" ry="1.5" fill="#344563"/><rect x="15.3" y="21" width="1.4" height="2.8" fill="#344563"/><path d="M13.8 23.8H18.2L17.5 25H14.5Z" fill="#344563"/></svg>
<div class="t" style="left:1188.00px;top:659.15px;font-size:14.00px;line-height:14.00px;color:#0052CC;-webkit-text-stroke:0.35px #0052CC;letter-spacing:0.206px;">admin</div>
<div class="t" style="left:1312.20px;top:659.15px;font-size:14.00px;line-height:14.00px;color:#172B4D;letter-spacing:0.069px;">2/01/2024</div>
<div class="r" style="left:1421px;top:658px;width:18px;height:16px;background:#0052CC;border-radius:8px;"></div>
<div class="t" style="left:1427.00px;top:660.54px;font-size:12.00px;line-height:12.00px;color:#FFFFFF;font-weight:700;">6</div>
<svg class="r" style="left:1512px;top:658px;" width="16" height="16" viewBox="0 0 16 16"><path d="M6 0.5H10Q10.5 0.5 10.5 1.2H15.3Q16 1.2 16 2V2.7Q16 3.3 15.3 3.3H0.7Q0 3.3 0 2.7V2Q0 1.2 0.7 1.2H5.5Q5.5 0.5 6 0.5Z" fill="#42526E"/><path d="M1 4.3H15L13.3 16H2.7Z" fill="#42526E"/></svg>
<svg class="r" style="left:1548px;top:656px;" width="8" height="20" viewBox="0 0 8 20"><circle cx="4" cy="3" r="2" fill="#42526E"/><circle cx="4" cy="10" r="2" fill="#42526E"/><circle cx="4" cy="17" r="2" fill="#42526E"/></svg>
<svg class="r" style="left:21px;top:713.5px;" width="18" height="17" viewBox="0 0 18 17"><path d="M9.00 1.60L11.17 6.31L16.32 6.92L12.52 10.44L13.53 15.53L9.00 13.00L4.47 15.53L5.48 10.44L1.68 6.92L6.83 6.31Z" fill="none" stroke="#C7C7C7" stroke-width="1.9" stroke-linejoin="round"/></svg>
<svg class="r" style="left:67px;top:712px;" width="13" height="16" viewBox="0 0 13 16"><path d="M0.9 1.2Q4 0.2 6.5 1Q9 1.7 11.9 1V9.6Q9 10.3 6.5 9.6Q4 9 2.9 9.5V14.1Q2.9 15 1.9 15Q0.9 15 0.9 14.1Z" fill="#172B4D"/></svg>
<div class="t" style="left:113.50px;top:709.15px;font-size:14.00px;line-height:14.00px;color:#0052CC;-webkit-text-stroke:0.35px #0052CC;letter-spacing:0.075px;">Standardvorlage Scrum+Story</div>
<div class="r" style="left:353px;top:712px;width:58px;height:20px;background:#F4F5F7;border-radius:3px;"></div>
<div class="t" style="left:357.80px;top:714.15px;font-size:14.00px;line-height:14.00px;color:#172B4D;transform:scaleX(0.8750);transform-origin:0.00px 0;">GLOBAL</div>
<div class="t" style="left:473.80px;top:715.15px;font-size:14.00px;line-height:14.00px;color:#172B4D;transform:scaleX(0.8786);transform-origin:0.00px 0;">GLOBAL</div>
<div class="r" style="left:598px;top:715px;width:46px;height:16px;background:#E3FCEF;border-radius:3px;"></div>
<div class="t" style="left:602.20px;top:717.69px;font-size:11.00px;line-height:11.00px;color:#006644;font-weight:700;transform:scaleX(0.8805);transform-origin:0.00px 0;">BERE...</div>
<svg class="r" style="left:668px;top:706px;" width="32" height="32" viewBox="0 0 32 32"><circle cx="16" cy="16" r="16" fill="#00B8D9"/><path d="M7.4 7H24.6L24.8 23.3L20 24.6V26.3Q16 28.6 12 26.3V24.6L7.2 23.3Z" fill="#FFAB00"/><path d="M5.2 8.5Q5.4 6.6 8 6.6H10V12.5H6.8Z" fill="#FF8B00"/><path d="M26.8 8.5Q26.6 6.6 24 6.6H22V12.5H25.2Z" fill="#FF8B00"/><path d="M13.3 7.2H18.7L18.9 12.8L21.4 15.2V23.8H10.6V15.2L13.1 12.8Z" fill="#FFFFFF"/><rect x="11" y="11" width="2.1" height="2.1" fill="#5E6C84"/><rect x="19" y="11" width="2.1" height="2.1" fill="#5E6C84"/><ellipse cx="16" cy="20.3" rx="2.7" ry="1.5" fill="#344563"/><rect x="15.3" y="21" width="1.4" height="2.8" fill="#344563"/><path d="M13.8 23.8H18.2L17.5 25H14.5Z" fill="#344563"/></svg>
<div class="t" style="left:722.00px;top:715.15px;font-size:14.00px;line-height:14.00px;color:#0052CC;-webkit-text-stroke:0.35px #0052CC;letter-spacing:0.056px;">admin</div>
<div class="t" style="left:831.30px;top:715.15px;font-size:14.00px;line-height:14.00px;color:#172B4D;letter-spacing:0.019px;">1/24/2024</div>
<svg class="r" style="left:947px;top:706px;" width="32" height="32" viewBox="0 0 32 32"><circle cx="16" cy="16" r="16" fill="#00B8D9"/><path d="M7.4 7H24.6L24.8 23.3L20 24.6V26.3Q16 28.6 12 26.3V24.6L7.2 23.3Z" fill="#FFAB00"/><path d="M5.2 8.5Q5.4 6.6 8 6.6H10V12.5H6.8Z" fill="#FF8B00"/><path d="M26.8 8.5Q26.6 6.6 24 6.6H22V12.5H25.2Z" fill="#FF8B00"/><path d="M13.3 7.2H18.7L18.9 12.8L21.4 15.2V23.8H10.6V15.2L13.1 12.8Z" fill="#FFFFFF"/><rect x="11" y="11" width="2.1" height="2.1" fill="#5E6C84"/><rect x="19" y="11" width="2.1" height="2.1" fill="#5E6C84"/><ellipse cx="16" cy="20.3" rx="2.7" ry="1.5" fill="#344563"/><rect x="15.3" y="21" width="1.4" height="2.8" fill="#344563"/><path d="M13.8 23.8H18.2L17.5 25H14.5Z" fill="#344563"/></svg>
<div class="t" style="left:1001.60px;top:715.15px;font-size:14.00px;line-height:14.00px;color:#0052CC;-webkit-text-stroke:0.35px #0052CC;letter-spacing:0.056px;">admin</div>
<svg class="r" style="left:1134px;top:706px;" width="32" height="32" viewBox="0 0 32 32"><circle cx="16" cy="16" r="16" fill="#00B8D9"/><path d="M7.4 7H24.6L24.8 23.3L20 24.6V26.3Q16 28.6 12 26.3V24.6L7.2 23.3Z" fill="#FFAB00"/><path d="M5.2 8.5Q5.4 6.6 8 6.6H10V12.5H6.8Z" fill="#FF8B00"/><path d="M26.8 8.5Q26.6 6.6 24 6.6H22V12.5H25.2Z" fill="#FF8B00"/><path d="M13.3 7.2H18.7L18.9 12.8L21.4 15.2V23.8H10.6V15.2L13.1 12.8Z" fill="#FFFFFF"/><rect x="11" y="11" width="2.1" height="2.1" fill="#5E6C84"/><rect x="19" y="11" width="2.1" height="2.1" fill="#5E6C84"/><ellipse cx="16" cy="20.3" rx="2.7" ry="1.5" fill="#344563"/><rect x="15.3" y="21" width="1.4" height="2.8" fill="#344563"/><path d="M13.8 23.8H18.2L17.5 25H14.5Z" fill="#344563"/></svg>
<div class="t" style="left:1188.00px;top:715.15px;font-size:14.00px;line-height:14.00px;color:#0052CC;-webkit-text-stroke:0.35px #0052CC;letter-spacing:0.206px;">admin</div>
<div class="t" style="left:1312.20px;top:715.15px;font-size:14.00px;line-height:14.00px;color:#172B4D;letter-spacing:0.069px;">2/01/2024</div>
<div class="r" style="left:1421px;top:714px;width:25px;height:16px;background:#0052CC;border-radius:8px;"></div>
<div class="t" style="left:1427.95px;top:716.54px;font-size:12.00px;line-height:12.00px;color:#FFFFFF;font-weight:700;transform:scaleX(0.8299);transform-origin:0.00px 0;">12</div>
<svg class="r" style="left:1512px;top:714px;" width="16" height="16" viewBox="0 0 16 16"><path d="M6 0.5H10Q10.5 0.5 10.5 1.2H15.3Q16 1.2 16 2V2.7Q16 3.3 15.3 3.3H0.7Q0 3.3 0 2.7V2Q0 1.2 0.7 1.2H5.5Q5.5 0.5 6 0.5Z" fill="#42526E"/><path d="M1 4.3H15L13.3 16H2.7Z" fill="#42526E"/></svg>
<svg class="r" style="left:1548px;top:712px;" width="8" height="20" viewBox="0 0 8 20"><circle cx="4" cy="3" r="2" fill="#42526E"/><circle cx="4" cy="10" r="2" fill="#42526E"/><circle cx="4" cy="17" r="2" fill="#42526E"/></svg>
</body></html>
